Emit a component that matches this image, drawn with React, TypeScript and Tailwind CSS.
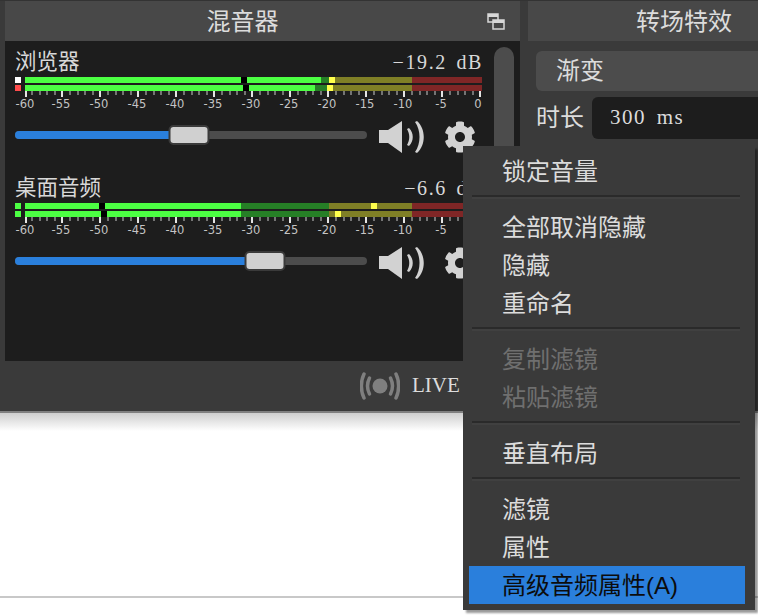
import { FaCog } from "react-icons/fa";
import { useMemo } from "react";

const sansFont = "font-['Liberation_Sans','Noto_Sans_CJK_SC',sans-serif]";
const serifFont = "font-['Liberation_Serif','Noto_Sans_CJK_SC',serif]";

const GREEN = "#4cff43";
const DIM_GREEN = "#267f26";
const DIM_YELLOW = "#7f7f26";
const DIM_RED = "#7f2626";
const PEAK = "#ffff4c";

type Segment = [number, number, string];

const channels: {
  name: string;
  level: string;
  sliderPct: number;
  squares: [string, string];
  rows: [Segment[], Segment[]];
}[] = [
  {
    name: "浏览器",
    level: "−19.2 dB",
    sliderPct: 49.3,
    squares: ["#ffffff", "#ff4c4c"],
    rows: [
      [
        [25, 241, GREEN],
        [241, 247, "#000000"],
        [247, 321, GREEN],
        [321, 329, DIM_GREEN],
        [329, 335, PEAK],
        [335, 412, DIM_YELLOW],
        [412, 482, DIM_RED],
      ],
      [
        [25, 243, GREEN],
        [243, 249, "#000000"],
        [249, 315, GREEN],
        [315, 327, DIM_GREEN],
        [327, 333, PEAK],
        [333, 412, DIM_YELLOW],
        [412, 482, DIM_RED],
      ],
    ],
  },
  {
    name: "桌面音频",
    level: "−6.6 dB",
    sliderPct: 70.9,
    squares: [GREEN, GREEN],
    rows: [
      [
        [25, 99, GREEN],
        [99, 105, "#000000"],
        [105, 241, GREEN],
        [241, 329, DIM_GREEN],
        [329, 371, DIM_YELLOW],
        [371, 377, PEAK],
        [377, 412, DIM_YELLOW],
        [412, 482, DIM_RED],
      ],
      [
        [25, 101, GREEN],
        [101, 107, "#000000"],
        [107, 241, GREEN],
        [241, 329, DIM_GREEN],
        [329, 335, DIM_YELLOW],
        [335, 341, PEAK],
        [341, 412, DIM_YELLOW],
        [412, 482, DIM_RED],
      ],
    ],
  },
];

const menuGroups: { label: string; disabled?: boolean; active?: boolean }[][] = [
  [{ label: "锁定音量" }],
  [{ label: "全部取消隐藏" }, { label: "隐藏" }, { label: "重命名" }],
  [{ label: "复制滤镜", disabled: true }, { label: "粘贴滤镜", disabled: true }],
  [{ label: "垂直布局" }],
  [{ label: "滤镜" }, { label: "属性" }, { label: "高级音频属性(A)", active: true }],
];

function Meter({ squares, rows }: { squares: [string, string]; rows: [Segment[], Segment[]] }) {
  const ticks = useMemo(
    () =>
      Array.from({ length: 61 }, (_, i) => ({
        major: i % 5 === 0,
        x: Math.max(25, Math.round(23.4 + 7.6 * i)),
        label: i % 5 === 0 ? String(-60 + i) : "",
      })),
    [],
  );

  return (
    <svg width="468" height="33" viewBox="15 77 468 33" className="block">
      {rows.map((row, r) => (
        <g key={r}>
          <rect x="15" y={77 + r * 8} width="6" height="6" fill={squares[r]} />
          {row.map(([from, to, color]) => (
            <rect key={from} x={from} y={77 + r * 8} width={to - from} height="6" fill={color} />
          ))}
        </g>
      ))}
      {ticks.map((t) => (
        <rect
          key={t.x}
          x={t.x}
          y="91"
          width="2"
          height={t.major ? 6 : 4}
          fill={t.major ? "#e4e4e4" : "#747474"}
        />
      ))}
      {ticks
        .filter((t) => t.major)
        .map((t) => (
          <text
            key={t.label}
            x={t.label === "0" ? 478 : t.x}
            y="108"
            textAnchor="middle"
            fontSize="11.5"
            fill="#c4c4c4"
            fontFamily="DejaVu Sans"
          >
            {t.label}
          </text>
        ))}
    </svg>
  );
}

function SpeakerIcon() {
  return (
    <svg width="46" height="34" viewBox="0 0 46 34" fill="#d2d2d2">
      <path d="M0 10 H9 L23 1 V33 L9 23 H0 Z" />
      <path d="M28 9 L30 8 C35 13 35 21 30 26 L28 25 C31 20 31 14 28 9 Z" />
      <path d="M36 2 L38 1 C47 9 47 25 38 33 L36 32 C42 24 42 10 36 2 Z" />
    </svg>
  );
}

function Channel({ name, level, sliderPct, squares, rows }: (typeof channels)[number]) {
  return (
    <div className="h-[126px] pt-[9px] pl-[10px]">
      <div className="flex h-6 w-[468px] items-center justify-between text-[21.5px] text-[#d8d8d8]">
        <span>{name}</span>
        <span className={`${serifFont} text-[20px] tracking-[1.6px] [word-spacing:3px]`}>{level}</span>
      </div>
      <div className="mt-[3px]">
        <Meter squares={squares} rows={rows} />
      </div>
      <div className="mt-[5px] flex h-10 items-center">
        <div className="relative h-2 w-[352px] rounded-full bg-[#4c4c4c]">
          <div className="h-2 rounded-full bg-[#2a7fdc]" style={{ width: `${sliderPct}%` }} />
          <div
            className="absolute top-[-6px] h-5 w-[41px] -translate-x-1/2 rounded-[5px] border-2 border-[#3a3a3a] bg-[#d0d0d0]"
            style={{ left: `${sliderPct}%` }}
          />
        </div>
        <div className="ml-3 mt-[4px] flex items-center">
          <SpeakerIcon />
          <FaCog className="ml-[19px] text-[32px] text-[#d2d2d2]" />
        </div>
      </div>
    </div>
  );
}

function LiveIcon() {
  return (
    <svg width="40" height="28" viewBox="0 0 40 28" fill="none" stroke="#7f7f7f" strokeWidth="3.5" strokeLinecap="round" className="shrink-0">
      <circle cx="20" cy="14" r="7.5" fill="#7f7f7f" stroke="none" />
      <path d="M9.5 6 C7 11 7 17 9.5 22" />
      <path d="M30.5 6 C33 11 33 17 30.5 22" />
      <path d="M4 2 C0.5 9 0.5 19 4 26" />
      <path d="M36 2 C39.5 9 39.5 19 36 26" />
    </svg>
  );
}

function DockTitle({ title, className }: { title: string; className: string }) {
  return (
    <div className={`flex h-10 items-center justify-center bg-[#484848] pt-[2px] text-2xl text-[#dcdcdc] ${className}`}>
      {title}
    </div>
  );
}

function ContextMenu() {
  return (
    <div className="absolute left-[463px] top-[146px] h-[464px] w-[292px] bg-[#3a3a3a] pl-[6px] pr-[10px] pt-[7px] text-2xl shadow-[3px_3px_2px_rgba(0,0,0,0.4)]">
      {menuGroups.map((group, g) => (
        <div key={g}>
          {g > 0 && (
            <div className="ml-[3px] mt-1 mb-[10px] h-1 w-[268px] border-t-2 border-[#2a2a2a] bg-[#404040]" />
          )}
          {group.map((item) => (
            <div
              key={item.label}
              className={`flex h-[38px] items-center pl-[33px] ${
                item.disabled
                  ? "text-[#6f6f6f]"
                  : item.active
                    ? "-mt-px bg-[#2a7fdc] pt-[2px] text-[#0c0c0c]"
                    : "text-[#dcdcdc]"
              }`}
            >
              {item.label}
            </div>
          ))}
        </div>
      ))}
    </div>
  );
}

export default function App() {
  return (
    <div className={`relative flex h-[616px] w-[758px] flex-col overflow-hidden bg-white ${sansFont}`}>
      <div className="h-[411px] shrink-0 border-t border-[#333333] bg-[#3a3a3a]">
        <div className="flex h-[360px] pl-[5px]">
          <div className="w-[515px] shrink-0">
            <div className="relative">
              <DockTitle title="混音器" className="pr-10" />
              <svg width="18" height="17" viewBox="0 0 18 17" className="absolute right-[15px] top-[12px]" fill="none" stroke="#d8d8d8" strokeWidth="1.5">
                <rect x="1" y="1" width="10" height="8" />
                <rect x="6" y="7" width="11" height="9" fill="#484848" />
                <path d="M6 8.5 H17" strokeWidth="3" />
                <path d="M1 2.5 H11" strokeWidth="3" />
              </svg>
            </div>
            <div className="flex h-80 bg-[#1d1d1d]">
              <div className="w-[485px] shrink-0">
                {channels.map((c) => (
                  <Channel key={c.name} {...c} />
                ))}
              </div>
              <div className="pl-[4px] pt-[6px]">
                <div className="h-[280px] w-5 rounded-t-[10px] bg-[#4c4c4c]" />
              </div>
            </div>
          </div>
          <div className="ml-2 w-[312px] shrink-0">
            <DockTitle title="转场特效" className="" />
            <div className="mt-[10px] ml-2 flex h-10 items-center rounded-md bg-[#4c4c4c] pl-5 text-2xl text-[#dcdcdc]">
              渐变
            </div>
            <div className="mt-[6px] ml-2 flex items-center">
              <span className="w-14 text-2xl text-[#dcdcdc]">时长</span>
              <div className={`flex h-[42px] flex-1 items-center rounded-md bg-[#1d1d1d] pl-[18px] text-[21px] tracking-[1.5px] text-[#dcdcdc] [word-spacing:4px] ${serifFont}`}>
                300 ms
              </div>
            </div>
          </div>
        </div>
        <div className="flex h-[50px] items-center pl-[360px]">
          <LiveIcon />
          <span className={`ml-3 text-[21px] text-[#dcdcdc] ${serifFont}`}>LIVE</span>
        </div>
      </div>
      <div className="h-[2px] shrink-0 bg-[#808080]" />
      <div className="h-[18px] shrink-0 bg-gradient-to-b from-[#cfcfcf] to-white" />
      <div className="flex-1" />
      <div className="mb-[18px] h-[2px] shrink-0 bg-[#c8c8c8]" />
      <ContextMenu />
    </div>
  );
}
